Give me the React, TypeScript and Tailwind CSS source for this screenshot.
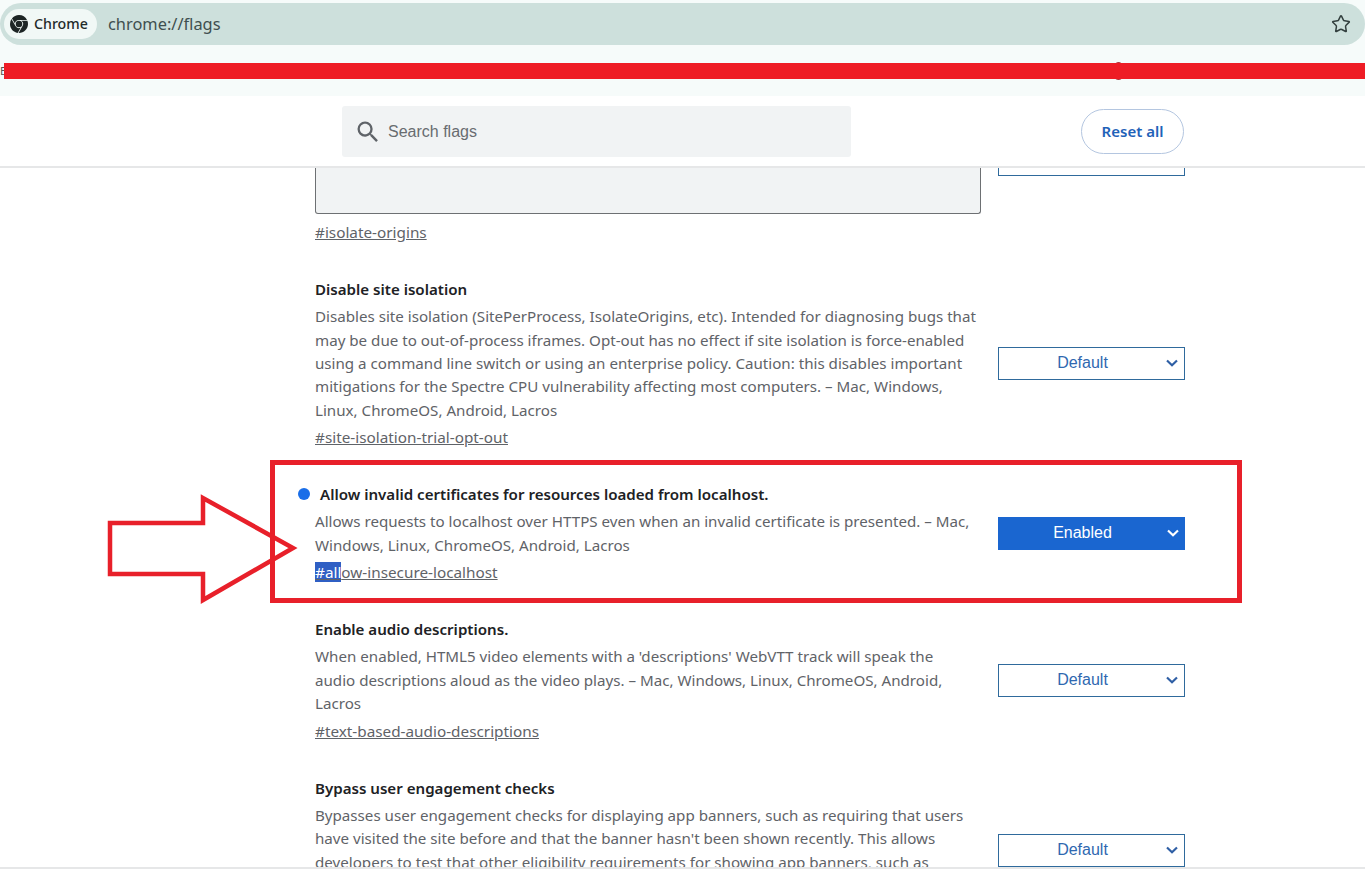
import React from "react"
import { MdSearch } from "react-icons/md"
import { SiGooglechrome } from "react-icons/si"
import { Star } from "lucide-react"

const Chevron: React.FC<{ color: string }> = ({ color }) => (
  <svg width="12" height="8" viewBox="0 0 12 8" fill="none" className="absolute right-[6px] top-1/2 -translate-y-1/2">
    <path d="M1 1.5L6 6.2L11 1.5" stroke={color} strokeWidth="2.2" />
  </svg>
)

const FlagSelect: React.FC<{ enabled?: boolean }> = ({ enabled }) => (
  <div
    className={
      enabled
        ? "relative w-[187px] h-[33px] shrink-0 flex items-center justify-center pr-[18px] bg-[#1a66d0] text-white text-[16px]"
        : "relative w-[187px] h-[33px] shrink-0 flex items-center justify-center pr-[18px] bg-white border border-[#2f6a9c] text-[#2f68b0] text-[16px]"
    }
    style={{ fontFamily: '"Liberation Sans", sans-serif' }}
  >
    {enabled ? "Enabled" : "Default"}
    <Chevron color={enabled ? "#ffffff" : "#2f5fa5"} />
  </div>
)

type FlagProps = {
  title: string
  lines: string[]
  anchor?: React.ReactNode
  enabled?: boolean
  modified?: boolean
}

const FlagRow: React.FC<FlagProps> = ({ title, lines, anchor, enabled, modified }) => (
  <div className="flex items-center gap-[18px] pl-[315px] mb-[33.2px] shrink-0">
    <div className={anchor ? "w-[665px] relative" : "w-[665px] h-[149px] relative"}>
      {modified && <span className="absolute left-[-17px] top-[6px] w-[12px] h-[12px] rounded-full bg-[#1a6ee8]" />}
      <h2 className={modified ? "h-[24px] leading-[24px] text-[15.1px] font-semibold text-[#202124] pl-[5px]" : "h-[24px] leading-[24px] text-[15.1px] font-semibold text-[#202124]"}>
        {title}
      </h2>
      <p className="mt-[4px] text-[15.15px] leading-[23.4px] text-[#5f6368] whitespace-nowrap">
        {lines.map((l) => (
          <span key={l} className="block">{l}</span>
        ))}
      </p>
      {anchor && <div className="mt-[3px] h-[24px] leading-[24px] text-[15.3px] text-[#5f6368] underline">{anchor}</div>}
    </div>
    <FlagSelect enabled={enabled} />
  </div>
)

export default function App() {
  return (
    <div className="relative h-[888px] overflow-hidden bg-white flex flex-col" style={{ fontFamily: '"Noto Sans", sans-serif' }}>
      {/* browser chrome */}
      <div className="h-[96px] bg-[#f6fbfa] pt-[3px] shrink-0">
        <div className="h-[42px] rounded-full bg-[#cde0dc] flex items-center pl-[4px] pr-[14px]">
          <div className="w-[93px] h-[30px] rounded-full bg-[#f1f8f6] flex items-center gap-[6px] pl-[6px] text-[14.2px] font-medium text-[#1f2a2a]">
            <SiGooglechrome size={18} color="#1d2525" />
            Chrome
          </div>
          <span className="ml-[11px] text-[16.4px] text-[#3f4f4f]">chrome://flags</span>
          <Star size={20} strokeWidth={1.8} color="#33403f" className="ml-auto" />
        </div>
        <div className="relative mt-[18px] flex items-center">
          <span className="w-[4px] overflow-hidden text-[11px] leading-[16px] text-[#555]">E</span>
          <span className="absolute left-[1115px] top-[-1px] w-[7px] h-[18px] rounded-full bg-[#a8323a]" />
          <div className="relative h-[16px] flex-1 bg-[#ee1c25]" />
        </div>
      </div>

      {/* search header */}
      <div className="h-[72px] bg-white border-b-2 border-[#e6e7e8] flex items-start pl-[342px] shrink-0 relative z-10">
        <div className="mt-[10px] w-[509px] h-[51px] bg-[#f1f3f4] rounded-[3px] flex items-center pl-[12px] gap-[6px] text-[16px] text-[#686c70]" style={{ fontFamily: '"Liberation Sans", sans-serif' }}>
          <MdSearch size={28} color="#5f6368" />
          Search flags
        </div>
        <div className="ml-[230px] mt-[13px] w-[103px] h-[45px] rounded-full border border-[#b4c6e0] flex items-center justify-center text-[15px] font-semibold text-[#1f62b8]">
          Reset all
        </div>
      </div>

      {/* flag list */}
      <div className="h-[699px] overflow-hidden flex flex-col shrink-0">
        <div className="flex gap-[17px] pl-[315px] shrink-0">
          <div className="w-[666px] h-[46px] bg-[#f1f3f4] border border-t-0 border-[#6d7073] rounded-b-[3px]" />
          <div className="w-[187px] h-[8px] bg-white border border-t-0 border-[#2f6a9c]" />
        </div>
        <div className="pl-[315px] mt-[6px] mb-[33.2px] h-[24px] leading-[24px] text-[15.3px] text-[#5f6368] underline shrink-0">#isolate-origins</div>

        <FlagRow
          title="Disable site isolation"
          lines={[
            "Disables site isolation (SitePerProcess, IsolateOrigins, etc). Intended for diagnosing bugs that",
            "may be due to out-of-process iframes. Opt-out has no effect if site isolation is force-enabled",
            "using a command line switch or using an enterprise policy. Caution: this disables important",
            "mitigations for the Spectre CPU vulnerability affecting most computers. – Mac, Windows,",
            "Linux, ChromeOS, Android, Lacros",
          ]}
          anchor="#site-isolation-trial-opt-out"
        />
        <FlagRow
          modified
          enabled
          title="Allow invalid certificates for resources loaded from localhost."
          lines={[
            "Allows requests to localhost over HTTPS even when an invalid certificate is presented. – Mac,",
            "Windows, Linux, ChromeOS, Android, Lacros",
          ]}
          anchor={
            <>
              <span className="bg-[#2f5fc4] text-white">#all</span>ow-insecure-localhost
            </>
          }
        />
        <FlagRow
          title="Enable audio descriptions."
          lines={[
            "When enabled, HTML5 video elements with a 'descriptions' WebVTT track will speak the",
            "audio descriptions aloud as the video plays. – Mac, Windows, Linux, ChromeOS, Android,",
            "Lacros",
          ]}
          anchor="#text-based-audio-descriptions"
        />
        <FlagRow
          title="Bypass user engagement checks"
          lines={[
            "Bypasses user engagement checks for displaying app banners, such as requiring that users",
            "have visited the site before and that the banner hasn't been shown recently. This allows",
            "developers to test that other eligibility requirements for showing app banners, such as",
          ]}
        />
      </div>
      <div className="flex-1 bg-white border-t-2 border-[#e6e7e8]" />

      {/* red annotation frame and arrow */}
      <div className="absolute left-[270px] top-[460px] w-[972px] h-[143px] border-[5px] border-[#e8202a] pointer-events-none z-20" />
      <svg width="210" height="120" viewBox="0 0 210 120" fill="none" className="absolute left-[100px] top-[490px] z-20 pointer-events-none">
        <path d="M10 33H103V8L193 58L103 110V84H10Z" stroke="#e8202a" strokeWidth="4.5" />
      </svg>
    </div>
  )
}
